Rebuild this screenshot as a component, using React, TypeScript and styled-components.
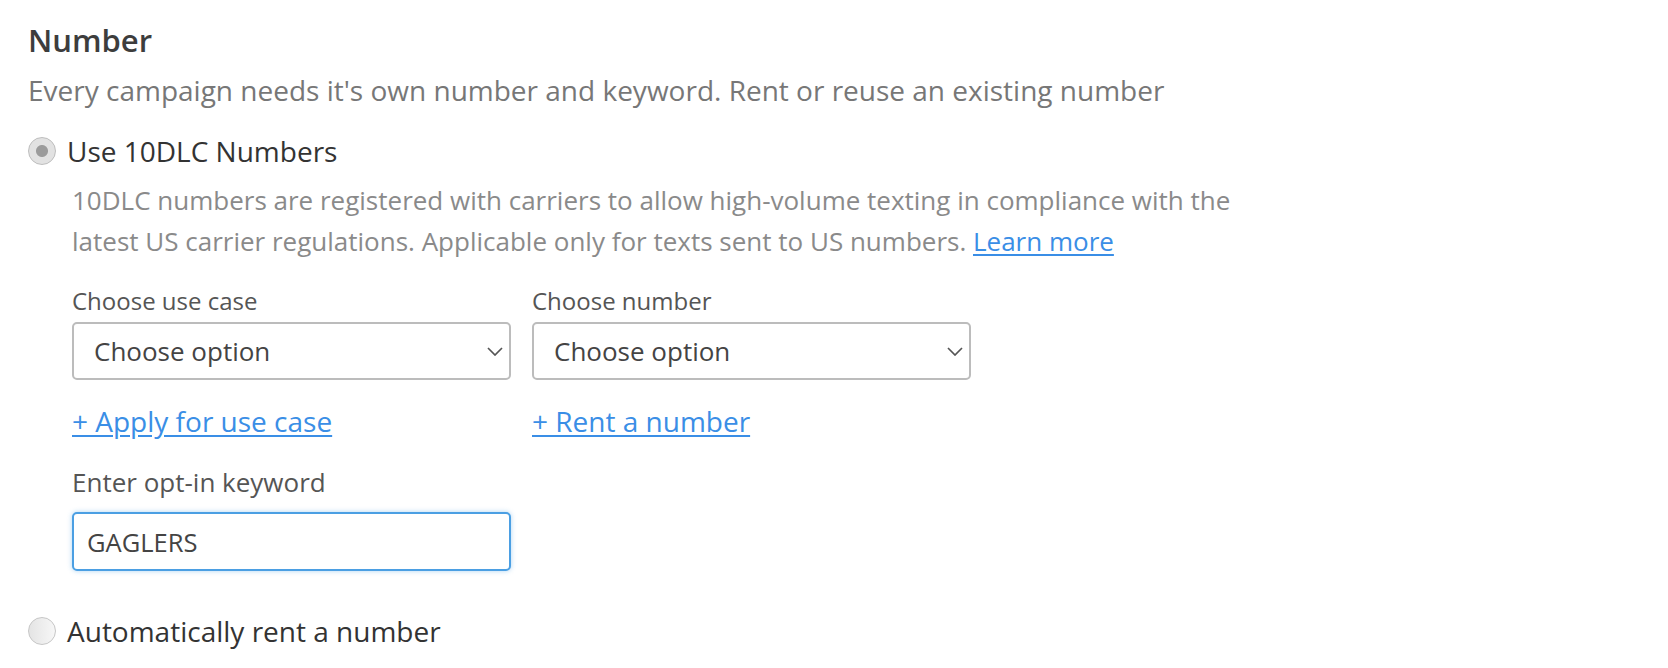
import React from 'react'
import styled, { createGlobalStyle } from 'styled-components'

const GlobalStyle = createGlobalStyle`
  body {
    margin: 0;
    background: #fff;
    font-family: "Open Sans", "Noto Sans", sans-serif;
  }
`;

const Section = styled.section`
  display: flex;
  flex-direction: column;
  padding: 20px 0 0 28px;
`;

const Title = styled.h2`
  margin: 0;
  font-size: 31px;
  line-height: 40px;
  font-weight: 600;
  color: #3d3d3d;
`;

const Subtitle = styled.p`
  margin: 12px 0 0;
  font-size: 28px;
  line-height: 36px;
  color: #777;
`;

const RadioRow = styled.label<{ $top: number }>`
  display: flex;
  align-items: center;
  gap: 11px;
  margin-top: ${p => p.$top}px;
  font-size: 28px;
  line-height: 38px;
  color: #333;
`;

const Radio = styled.input.attrs({ type: 'radio' })`
  appearance: none;
  margin: 0;
  width: 28px;
  height: 28px;
  border-radius: 50%;
  border: 1.5px solid #c6c6c6;
  background: linear-gradient(90deg, #e4e4e4, #f7f7f7);
  box-sizing: border-box;
  flex-shrink: 0;

  &:checked {
    background: radial-gradient(circle, #9b9b9b 0 5.5px, #e2e2e2 6.5px);
    border-color: #bdbdbd;
  }
`;

const Body = styled.div`
  display: flex;
  flex-direction: column;
  padding-left: 44px;
`;

const Help = styled.p`
  margin: 10px 0 0;
  max-width: 1190px;
  font-size: 26px;
  line-height: 41px;
  color: #8a8a8a;
`;

const TextLink = styled.a`
  color: #3a8ee6;
  text-decoration: underline;
  text-underline-offset: 3px;
  cursor: pointer;
`;

const FieldGrid = styled.div`
  display: grid;
  grid-template-columns: 439px 439px;
  column-gap: 21px;
  margin-top: 23px;
`;

const Field = styled.div`
  display: flex;
  flex-direction: column;
`;

const Label = styled.span<{ $gap: number; $size: number }>`
  font-size: ${p => p.$size}px;
  line-height: 32px;
  color: #555;
  margin-bottom: ${p => p.$gap}px;
`;

const SelectWrap = styled.div`
  position: relative;
  height: 58px;
`;

const Select = styled.select`
  appearance: none;
  width: 100%;
  height: 100%;
  box-sizing: border-box;
  border: 2px solid #bcbcbc;
  border-radius: 5px;
  background: #fff;
  padding: 0 40px 0 20px;
  font-family: inherit;
  font-size: 26px;
  color: #444;
`;

const Chevron = styled.svg`
  position: absolute;
  right: 8px;
  top: 25px;
  pointer-events: none;
`;

const AddLink = styled(TextLink)`
  font-size: 28px;
  line-height: 36px;
  margin-top: 23px;
  align-self: flex-start;
`;

const KeywordField = styled(Field)`
  margin-top: 27px;
  width: 439px;
`;

const TextInput = styled.input`
  height: 59px;
  box-sizing: border-box;
  border: 2px solid #4b9fe3;
  border-radius: 5px;
  box-shadow: 0 0 5px rgba(75, 159, 227, 0.45);
  padding: 0 13px;
  font-family: inherit;
  font-size: 25.5px;
  color: #444;
  outline: none;
`;

const SelectField = ({ label, link }: { label: string; link: string }) => (
  <Field>
    <Label $gap={5} $size={24}>{label}</Label>
    <SelectWrap>
      <Select defaultValue="">
        <option value="">Choose option</option>
      </Select>
      <Chevron width="16" height="9" viewBox="0 0 16 9">
        <polyline points="1,1 8,8 15,1" fill="none" stroke="#555" strokeWidth="1.7" />
      </Chevron>
    </SelectWrap>
    <AddLink>{link}</AddLink>
  </Field>
)

const App = () => {
  return (
    <>
      <GlobalStyle />
      <Section>
        <Title>Number</Title>
        <Subtitle>Every campaign needs it's own number and keyword. Rent or reuse an existing number</Subtitle>

        <RadioRow $top={24}>
          <Radio name="num" defaultChecked />
          Use 10DLC Numbers
        </RadioRow>

        <Body>
          <Help>
            10DLC numbers are registered with carriers to allow high-volume texting in compliance with the
            latest US carrier regulations. Applicable only for texts sent to US numbers.{' '}
            <TextLink>Learn more</TextLink>
          </Help>

          <FieldGrid>
            <SelectField label="Choose use case" link="+ Apply for use case" />
            <SelectField label="Choose number" link="+ Rent a number" />
          </FieldGrid>

          <KeywordField>
            <Label $gap={14} $size={26}>Enter opt-in keyword</Label>
            <TextInput defaultValue="GAGLERS" />
          </KeywordField>
        </Body>

        <RadioRow $top={41}>
          <Radio name="num" />
          Automatically rent a number
        </RadioRow>
      </Section>
    </>
  )
}

export default App
